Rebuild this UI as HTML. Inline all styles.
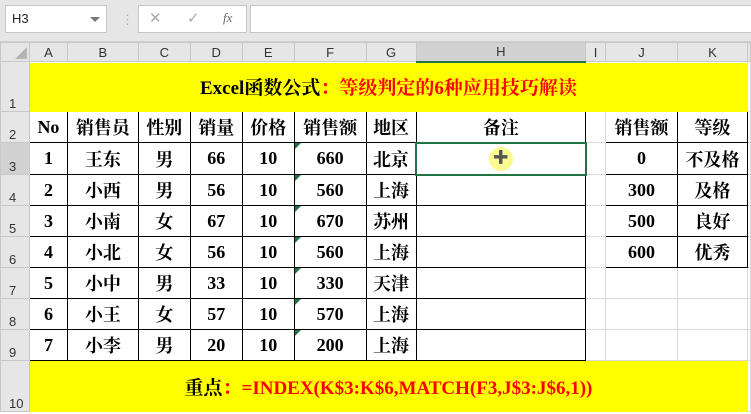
<!DOCTYPE html>
<html><head><meta charset="utf-8"><style>
*{margin:0;padding:0;box-sizing:border-box}
body{width:751px;height:414px;overflow:hidden;background:#fff;font-family:"Liberation Sans",sans-serif;position:relative}
.top{position:absolute;left:0;top:0;width:751px;height:42px;background:#e6e6e6;border-bottom:1px solid #d0d0d0}
.nb{position:absolute;left:5px;top:5px;width:102px;height:28px;background:#fff;border:1px solid #c6c6c6;font-size:13px;line-height:26px;padding-left:6px;color:#222}
.nb:after{content:"";position:absolute;right:6px;top:11px;border:5px solid transparent;border-top:5px solid #777}
.fb{position:absolute;left:138px;top:5px;width:109px;height:28px;background:#fff;border:1px solid #c6c6c6;color:#aaa;font-size:15px}
.fx{position:absolute;left:250px;top:5px;width:501px;height:28px;background:#fff;border:1px solid #c6c6c6;border-right:none}
table{position:absolute;left:0;top:42px;border-collapse:collapse;table-layout:fixed}
td{border:1px solid #d9d9d9;text-align:center;vertical-align:middle;font-family:"Liberation Serif","Noto Serif CJK SC",serif;font-weight:bold;font-size:18px;color:#000;padding:0;overflow:hidden;white-space:nowrap;position:relative}
td.ch{background:#e6e6e6;font-family:"Liberation Sans",sans-serif;font-weight:normal;font-size:13px;color:#333;border-color:#c8c8c8}
td.rh{background:#e6e6e6;font-family:"Liberation Sans",sans-serif;font-weight:normal;font-size:13px;color:#333;vertical-align:bottom;text-align:left;padding-left:8px;border-color:#c8c8c8}
td.b{border:1px solid #000}
td.t{font-size:19px}
.y{background:#ff0}
.r{color:#f00}
.sel{background:#d2d2d2!important}
.g:before{content:"";position:absolute;left:0;top:0;border:3px solid transparent;border-left-color:#217346;border-top-color:#217346}
</style></head><body>
<div class="top">
<div class="nb">H3</div>
<div style="position:absolute;left:121px;top:12px;color:#aaa;font-size:13px">⋮</div>
<div class="fb"><span style="position:absolute;left:10px;top:3px">✕</span><span style="position:absolute;left:48px;top:3px">✓</span><span style="position:absolute;left:84px;top:4px;font-family:'Liberation Serif',serif;font-style:italic;color:#666;font-size:13px">fx</span></div>
<div class="fx"></div>
</div>
<table>
<colgroup><col style="width:29px"><col style="width:38px"><col style="width:71px"><col style="width:52px"><col style="width:52px"><col style="width:52px"><col style="width:72px"><col style="width:50px"><col style="width:170px"><col style="width:20px"><col style="width:72px"><col style="width:70px"><col style="width:3px"></colgroup>
<tr style="height:19px"><td class="ch"><span style="position:absolute;right:2px;bottom:2px;border:6px solid transparent;border-right-color:#b5b5b5;border-bottom-color:#b5b5b5"></span></td><td class="ch">A</td><td class="ch">B</td><td class="ch">C</td><td class="ch">D</td><td class="ch">E</td><td class="ch">F</td><td class="ch">G</td><td class="ch sel" style="border-bottom:2px solid #217346">H</td><td class="ch">I</td><td class="ch">J</td><td class="ch">K</td><td class="ch"></td></tr>
<tr style="height:50px"><td class="rh">1</td><td colspan="11" class="y t" style="border-color:#ff0">Excel函数公式<span class="r">：等级判定的6种应用技巧解读</span></td><td></td></tr>
<tr style="height:31px"><td class="rh">2</td><td class="b">No</td><td class="b">销售员</td><td class="b">性别</td><td class="b">销量</td><td class="b">价格</td><td class="b">销售额</td><td class="b">地区</td><td class="b">备注</td><td></td><td class="b">销售额</td><td class="b">等级</td><td></td></tr>
<tr style="height:32px"><td class="rh sel">3</td><td class="b">1</td><td class="b">王东</td><td class="b">男</td><td class="b">66</td><td class="b">10</td><td class="b g">660</td><td class="b">北京</td><td class="b" style="border:2px solid #217346"><span style="display:inline-block;width:24px;height:24px;border-radius:12px;background:#fafa90;line-height:24px;color:#555;font-size:16px">✚</span></td><td></td><td class="b">0</td><td class="b">不及格</td><td></td></tr>
<tr style="height:31px"><td class="rh">4</td><td class="b">2</td><td class="b">小西</td><td class="b">男</td><td class="b">56</td><td class="b">10</td><td class="b g">560</td><td class="b">上海</td><td class="b"></td><td></td><td class="b">300</td><td class="b">及格</td><td></td></tr>
<tr style="height:31px"><td class="rh">5</td><td class="b">3</td><td class="b">小南</td><td class="b">女</td><td class="b">67</td><td class="b">10</td><td class="b g">670</td><td class="b">苏州</td><td class="b"></td><td></td><td class="b">500</td><td class="b">良好</td><td></td></tr>
<tr style="height:31px"><td class="rh">6</td><td class="b">4</td><td class="b">小北</td><td class="b">女</td><td class="b">56</td><td class="b">10</td><td class="b g">560</td><td class="b">上海</td><td class="b"></td><td></td><td class="b">600</td><td class="b">优秀</td><td></td></tr>
<tr style="height:31px"><td class="rh">7</td><td class="b">5</td><td class="b">小中</td><td class="b">男</td><td class="b">33</td><td class="b">10</td><td class="b g">330</td><td class="b">天津</td><td class="b"></td><td></td><td></td><td></td><td></td></tr>
<tr style="height:31px"><td class="rh">8</td><td class="b">6</td><td class="b">小王</td><td class="b">女</td><td class="b">57</td><td class="b">10</td><td class="b g">570</td><td class="b">上海</td><td class="b"></td><td></td><td></td><td></td><td></td></tr>
<tr style="height:31px"><td class="rh">9</td><td class="b">7</td><td class="b">小李</td><td class="b">男</td><td class="b">20</td><td class="b">10</td><td class="b g">200</td><td class="b">上海</td><td class="b"></td><td></td><td></td><td></td><td></td></tr>
<tr style="height:51px"><td class="rh">10</td><td colspan="11" class="y t" style="border-color:#ff0">重点<span class="r">：=INDEX(K$3:K$6,MATCH(F3,J$3:J$6,1))</span></td><td></td></tr>
</table>
</body></html>
